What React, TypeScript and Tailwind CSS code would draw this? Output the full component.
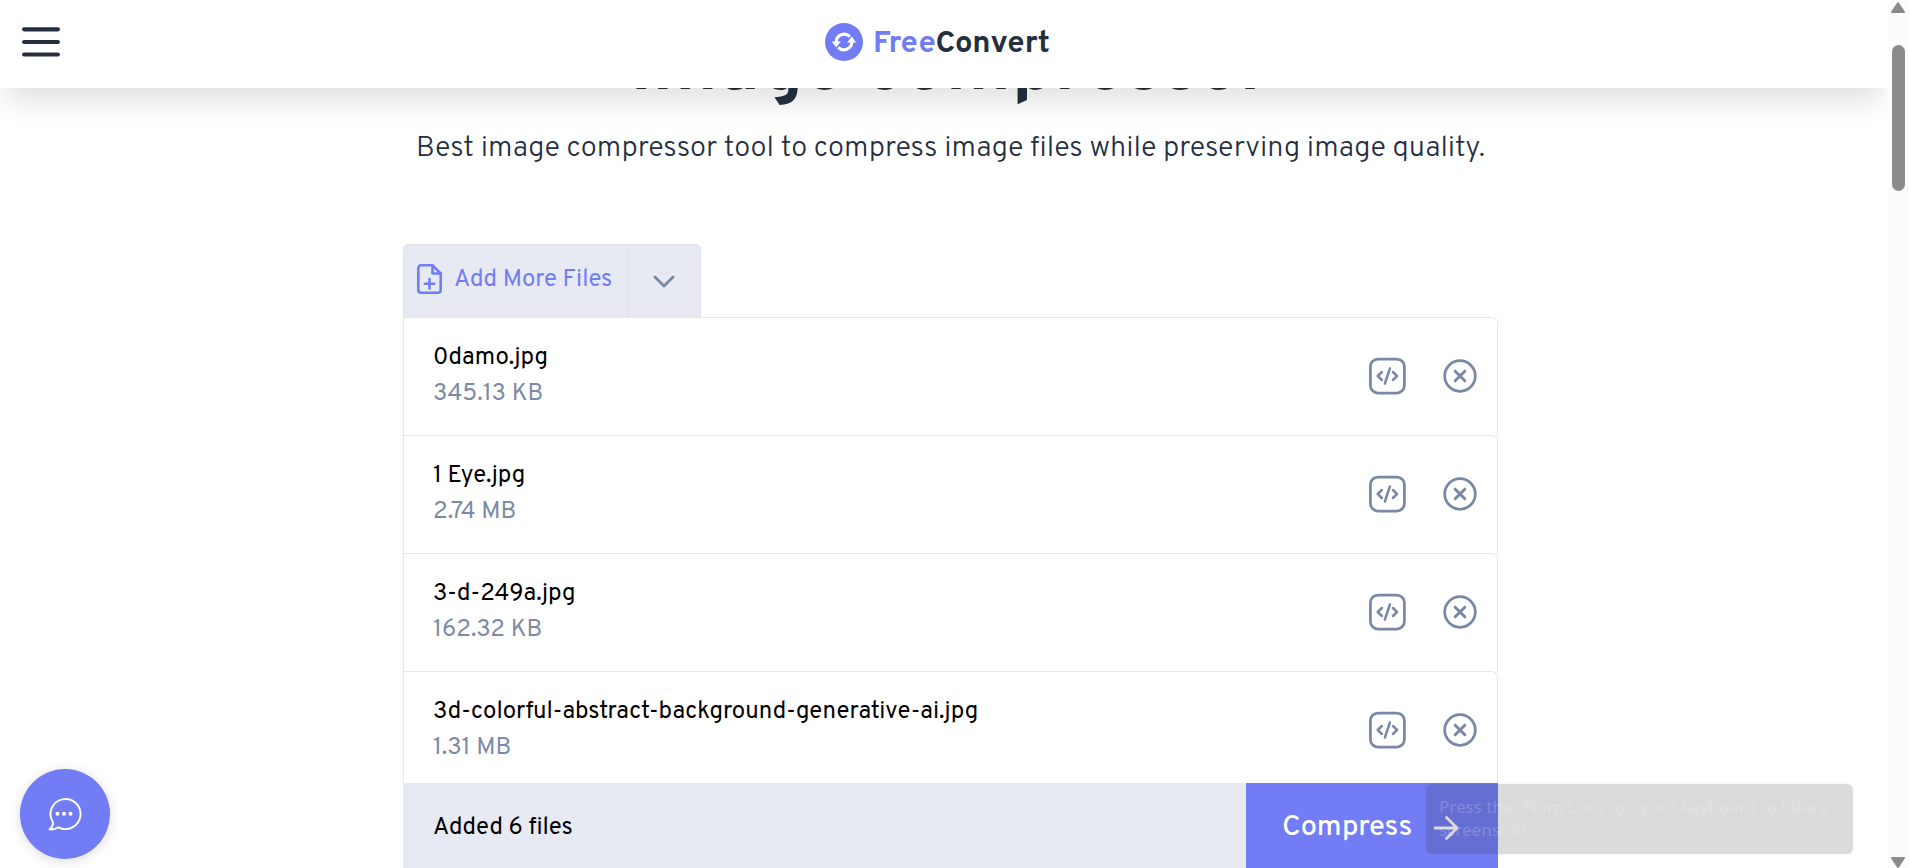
const files = [
  { name: '0damo.jpg', size: '345.13 KB' },
  { name: '1 Eye.jpg', size: '2.74 MB' },
  { name: '3-d-249a.jpg', size: '162.32 KB' },
  { name: '3d-colorful-abstract-background-generative-ai.jpg', size: '1.31 MB' },
];

function FileRow({ name, size }: { name: string; size: string }) {
  return (
    <li className="-mt-px flex h-[119px] items-center justify-between rounded-tr-md border border-b-0 border-[#e5e8ed] bg-white pr-5 pb-0.5 pl-[29px]">
      <div className="text-2xl leading-9">
        <p className="text-black">{name}</p>
        <p className="text-[#7b8aa5]">{size}</p>
      </div>
      <div className="flex items-center gap-9">
        <button type="button" aria-label={`Settings for ${name}`} className="text-[#7888a6]">
          <svg width="39" height="38" viewBox="0 0 39 38" fill="none" stroke="currentColor" strokeWidth="2.75" strokeLinecap="round" strokeLinejoin="round">
            <rect x="2.400" y="2" width="34" height="34" rx="7.5" />
            <path d="M13.900 15 9.700 19l4.200 4M24.900 15l4.200 4-4.200 4M21.900 11.500l-5 15" strokeWidth="2.500" />
          </svg>
        </button>
        <button type="button" aria-label={`Remove ${name}`} className="text-[#7888a6]">
          <svg width="34" height="34" viewBox="0 0 34 34" fill="none" stroke="currentColor" strokeWidth="2.75" strokeLinecap="round">
            <circle cx="17" cy="17" r="15.300" />
            <path d="m12.200 12.200 9.600 9.600M21.800 12.200l-9.600 9.600" strokeWidth="3" />
          </svg>
        </button>
      </div>
    </li>
  );
}

function Header() {
  return (
    <header className="relative z-10 flex h-[88px] shrink-0 items-center justify-center bg-white pr-3 pb-1 shadow-[0_20px_25px_-5px_rgba(0,0,0,0.11)]">
      <button type="button" aria-label="Open menu" className="absolute left-[22px]">
        <svg width="38" height="32" viewBox="0 0 38 32" stroke="#252f3f" strokeWidth="4.200" strokeLinecap="round">
          <path d="M2.100 3.300h33.800M2.100 16h33.800M2.100 28.500h33.800" />
        </svg>
      </button>
      <a href="#home" className="flex items-center gap-2.5 text-[31px] leading-[38px] font-bold">
        <svg width="38" height="38" viewBox="0 0 38 38">
          <circle cx="19" cy="19" r="19" fill="#727cf5" />
          <path d="M11.200 19a7.900 7.900 0 0 1 13.600-5.400M26.800 19a7.900 7.900 0 0 1-13.600 5.400" fill="none" stroke="#fff" strokeWidth="3.200" />
          <path d="M6.800 18.500h9L11.200 24.500zM31.200 19.500h-9L26.800 13.500z" fill="#fff" />
        </svg>
        <span className="pt-1.5">
          <span className="text-[#727cf5]">Free</span>Convert
        </span>
      </a>
    </header>
  );
}

function AddFiles() {
  return (
    <div className="flex h-[74px] w-[298px] rounded-t-md border border-b-0 border-[#dfe2e6] bg-[#e7eaf2]">
      <button type="button" className="flex flex-1 items-center gap-2.5 pb-1 pl-3 text-2xl text-[#727cf5]">
        <svg width="28" height="32" viewBox="0 1 28 32" fill="none" stroke="currentColor" strokeWidth="2.600" strokeLinecap="round" strokeLinejoin="round">
          <path d="M16.500 2.300H5a2.700 2.700 0 0 0-2.700 2.700v22A2.700 2.700 0 0 0 5 29.700h17a2.700 2.700 0 0 0 2.700-2.700V10.500z" />
          <path d="M16.500 2.300v8.200h8.200M13.500 16v9.400M8.800 20.700h9.400" />
        </svg>
        Add More Files
      </button>
      <button type="button" aria-label="More upload sources" className="flex w-[73px] items-center justify-center border-l border-[#dfe2e6] text-[#7888a0]">
        <svg width="24" height="16" viewBox="0 0 24 16" fill="none" stroke="currentColor" strokeWidth="2.800" strokeLinecap="round" strokeLinejoin="round">
          <path d="m3 3 9 9 9-9" />
        </svg>
      </button>
    </div>
  );
}

function ActionBar() {
  return (
    <footer className="flex shrink-0 justify-center pl-3.5">
      <div className="flex h-[85px] w-full max-w-[1095px] items-stretch justify-between bg-[#e7eaf2]">
        <p className="flex items-center pt-1 pl-[30px] text-2xl text-black">Added 6 files</p>
        <button type="button" className="flex w-[252px] items-center gap-5 bg-[#727cf5] pt-1 pl-9 text-[29px] font-medium text-white">
          Compress
          <svg width="28" height="28" viewBox="0 0 28 28" fill="none" stroke="currentColor" strokeWidth="2.800" strokeLinecap="round" strokeLinejoin="round">
            <path d="M3 14h22M14.500 3.500 25 14 14.500 24.500" />
          </svg>
        </button>
      </div>
    </footer>
  );
}

function Scrollbar() {
  return (
    <div aria-hidden="true" className="flex w-[22px] shrink-0 flex-col items-center bg-[#fcfcfc] pt-0.5">
      <svg width="14" height="11" viewBox="0 0 14 11" fill="#8b8b8b" stroke="#8b8b8b" strokeWidth="2" strokeLinejoin="round">
        <path d="M7 1.200 13 10H1z" />
      </svg>
      <div className="mt-8 h-[146px] w-[13px] rounded-full bg-[#8b8b8b]" />
      <svg className="mt-auto" width="14" height="11" viewBox="0 0 14 11" fill="#8b8b8b" stroke="#8b8b8b" strokeWidth="2" strokeLinejoin="round">
        <path d="M1 1h12L7 10z" />
      </svg>
    </div>
  );
}

export default function App() {
  return (
    <div className="flex h-screen overflow-hidden bg-white font-['Overpass','Roboto',sans-serif] text-[#252f3f]">
      <div className="relative flex min-w-0 flex-1 flex-col overflow-hidden">
        <Header />
        <main className="flex min-h-0 flex-1 flex-col items-center overflow-hidden pl-3.5">
          <h1 className="-mt-[54px] shrink-0 text-[75px] leading-[74px] font-bold">Image compressor</h1>
          <p className="mt-[21px] shrink-0 text-[29px] leading-10 font-light">
            Best image compressor tool to compress image files while preserving image quality.
          </p>
          <section className="mt-[75px] w-full max-w-[1095px] shrink-0">
            <AddFiles />
            <ul>
              {files.map((f) => (
                <FileRow key={f.name} {...f} />
              ))}
            </ul>
          </section>
        </main>
        <ActionBar />
        <button type="button" aria-label="Open chat" className="absolute bottom-[9px] left-5 flex size-[90px] items-center justify-center rounded-full bg-[#727cf5] shadow-[0_2px_12px_rgba(0,0,0,0.15)]">
          <svg width="36" height="36" viewBox="1 0 36 36" fill="none" stroke="#fff" strokeWidth="1.900" strokeLinejoin="round">
            <path d="M6.800 26A15 15 0 1 1 12.500 31.300C10 32.900 6.500 33.800 3.500 33.300 6 31.500 7.300 28.500 6.800 26z" />
            <g fill="#fff" stroke="none">
              <circle cx="11.500" cy="17.700" r="2" />
              <circle cx="18" cy="17.700" r="2" />
              <circle cx="24.500" cy="17.700" r="2" />
            </g>
          </svg>
        </button>
        <div role="status" className="absolute right-[34px] bottom-[14px] w-[427px] rounded-md bg-[rgba(40,40,40,0.17)] px-[13px] pt-[11px] pb-[13px] font-['Noto_Sans','Open_Sans',sans-serif] text-[17px] leading-[23px] text-white/20 shadow-[0_0_4px_rgba(0,0,0,0.06)]">
          Press the "Num Lock" on your keyboard to take a screenshot
        </div>
      </div>
      <Scrollbar />
    </div>
  );
}
